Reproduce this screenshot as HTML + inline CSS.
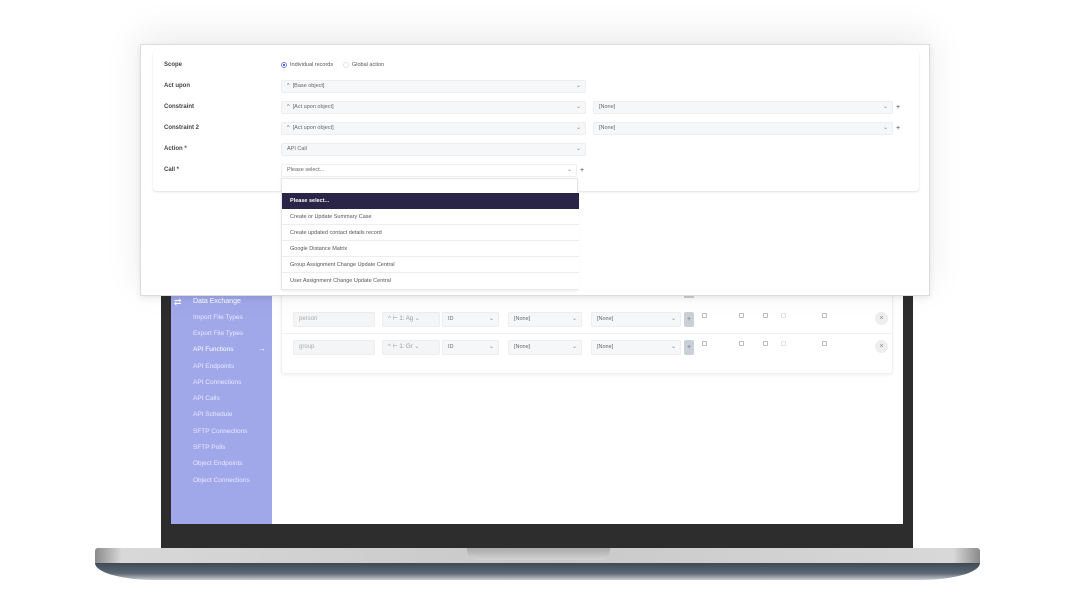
<!DOCTYPE html>
<html><head><meta charset="utf-8"><style>
*{box-sizing:border-box;margin:0;padding:0}
body{width:1070px;height:603px;background:#fff;position:relative;overflow:hidden;font-family:"Liberation Sans",sans-serif;}
.a{position:absolute}
.lbl{font-size:6px;color:#444;font-weight:bold}
.sel{position:absolute;height:13px;background:#f6f7f8;border:1px solid #eceef0;border-radius:2px;font-size:5.5px;color:#666;line-height:11px;padding-left:5px}
.sel .c{position:absolute;right:4px;top:0;color:#888;font-size:6px}
.side{font-size:6.5px;color:#e8eaff}
.inp{position:absolute;height:15px;background:#f4f5f6;border:1px solid #eceef0;border-radius:2px;font-size:6px;color:#aaa;line-height:13px;padding-left:5px}
.cb{position:absolute;width:5px;height:5px;border:1px solid #bbb;border-radius:1px}
.li{position:absolute;left:0;width:297px;height:16px;border-bottom:1px solid #eee;font-size:5.5px;color:#555;line-height:16px;padding-left:8px;background:#fff}
</style></head><body>

<div class="a" style="left:161px;top:240px;width:752px;height:309px;background:#2d2d2d;border-radius:4px 4px 0 0"></div>
<div class="a" style="left:171px;top:240px;width:732px;height:284px;background:#fff"></div>
<div class="a" style="left:171px;top:240px;width:101px;height:284px;background:#a0a8ea"></div>
<div class="a" style="left:95px;top:563px;width:885px;height:17px;background:linear-gradient(#3e4a56,#5b6772 60%,#c7ccd0);border-radius:0 0 60px 60px / 0 0 17px 17px"></div>
<div class="a" style="left:95px;top:548px;width:885px;height:15px;background:linear-gradient(90deg,#8a8a8a,#d8d8d8 3%,#c8c8c8 50%,#d8d8d8 97%,#8a8a8a);border-radius:3px 3px 0 0"></div>
<div class="a" style="left:467px;top:548px;width:143px;height:12px;background:linear-gradient(#a9a9a9,#d4d4d4);border-radius:0 0 10px 10px"></div>

<div class="a" style="left:174px;top:297px;width:10px;height:10px;color:#fff;font-size:9px;line-height:10px">⇄</div>
<div class="a side" style="left:193px;top:298px;color:#fff;font-size:7px">Data Exchange</div>
<div class="a side" style="left:193px;top:314px">Import File Types</div>
<div class="a side" style="left:193px;top:330px">Export File Types</div>
<div class="a side" style="left:193px;top:346px;color:#fff">API Functions</div>
<div class="a" style="left:258px;top:344px;color:#fff;font-size:8px">→</div>
<div class="a side" style="left:193px;top:363px">API Endpoints</div>
<div class="a side" style="left:193px;top:379px">API Connections</div>
<div class="a side" style="left:193px;top:395px">API Calls</div>
<div class="a side" style="left:193px;top:411px">API Schedule</div>
<div class="a side" style="left:193px;top:428px">SFTP Connections</div>
<div class="a side" style="left:193px;top:444px">SFTP Polls</div>
<div class="a side" style="left:193px;top:460px">Object Endpoints</div>
<div class="a side" style="left:193px;top:477px">Object Connections</div>

<div class="a" style="left:281px;top:290px;width:612px;height:84px;border:1px solid #f0f0f0;border-radius:3px;box-shadow:0 1px 3px rgba(0,0,0,.06)"></div>
<div class="a" style="left:282px;top:333px;width:610px;height:1px;background:#f2f2f2"></div>

<div class="inp" style="left:293px;top:312px;width:82px">person</div>
<div class="inp" style="left:382px;top:312px;width:58px;color:#999">^ ⊢ 1: Ag ⌄</div>
<div class="sel" style="left:442px;top:312px;width:57px;height:15px;line-height:13px">ID<span class="c">⌄</span></div>
<div class="sel" style="left:508px;top:312px;width:74px;height:15px;line-height:13px">[None]<span class="c">⌄</span></div>
<div class="sel" style="left:591px;top:312px;width:90px;height:15px;line-height:13px">[None]<span class="c">⌄</span></div>
<div class="a" style="left:684px;top:312px;width:10px;height:15px;background:#c9d0d8;border-radius:2px;font-size:7px;color:#777;text-align:center;line-height:15px">+</div>

<div class="inp" style="left:293px;top:340px;width:82px">group</div>
<div class="inp" style="left:382px;top:340px;width:58px;color:#999">^ ⊢ 1: Gr ⌄</div>
<div class="sel" style="left:442px;top:340px;width:57px;height:15px;line-height:13px">ID<span class="c">⌄</span></div>
<div class="sel" style="left:508px;top:340px;width:74px;height:15px;line-height:13px">[None]<span class="c">⌄</span></div>
<div class="sel" style="left:591px;top:340px;width:90px;height:15px;line-height:13px">[None]<span class="c">⌄</span></div>
<div class="a" style="left:684px;top:340px;width:10px;height:15px;background:#c9d0d8;border-radius:2px;font-size:7px;color:#777;text-align:center;line-height:15px">+</div>
<div class="a" style="left:684px;top:290px;width:10px;height:8px;background:#c9d0d8"></div>

<div class="cb" style="left:702px;top:313px"></div><div class="cb" style="left:739px;top:313px"></div><div class="cb" style="left:763px;top:313px"></div><div class="cb" style="left:781px;top:313px;border-color:#e2e2e2"></div><div class="cb" style="left:822px;top:313px"></div>
<div class="cb" style="left:702px;top:341px"></div><div class="cb" style="left:739px;top:341px"></div><div class="cb" style="left:763px;top:341px"></div><div class="cb" style="left:781px;top:341px;border-color:#e2e2e2"></div><div class="cb" style="left:822px;top:341px"></div>
<div class="a" style="left:875px;top:312px;width:13px;height:13px;border-radius:50%;background:#eee;color:#888;font-size:7px;text-align:center;line-height:13px">×</div>
<div class="a" style="left:875px;top:340px;width:13px;height:13px;border-radius:50%;background:#eee;color:#888;font-size:7px;text-align:center;line-height:13px">×</div>

<div class="a" style="left:140px;top:44px;width:790px;height:252px;background:#fff;border:1px solid #ddd;box-shadow:0 -10px 35px rgba(0,0,0,.08),0 2px 6px rgba(0,0,0,.08)">
  <div class="a" style="left:12px;top:6px;width:766px;height:140px;border-radius:3px;box-shadow:0 1px 2px rgba(0,0,0,.12)"></div>
  <div class="a lbl" style="left:23px;top:17px">Scope</div>
  <div class="a" style="left:140px;top:17px;width:6px;height:6px;border:1px solid #7a83e0;border-radius:50%;background:radial-gradient(#5a64d8 40%,#fff 45%)"></div>
  <div class="a" style="left:149px;top:17px;font-size:5.5px;color:#555">Individual records</div>
  <div class="a" style="left:202px;top:17px;width:6px;height:6px;border:1px solid #e4e4e4;border-radius:50%"></div>
  <div class="a" style="left:211px;top:17px;font-size:5.5px;color:#555">Global action</div>

  <div class="a lbl" style="left:23px;top:38px">Act upon</div>
  <div class="sel" style="left:140px;top:35px;width:305px">^ &nbsp;[Base object]<span class="c">⌄</span></div>
  <div class="a lbl" style="left:23px;top:59px">Constraint</div>
  <div class="sel" style="left:140px;top:56px;width:305px">^ &nbsp;[Act upon object]<span class="c">⌄</span></div>
  <div class="sel" style="left:452px;top:56px;width:300px">[None]<span class="c">⌄</span></div>
  <div class="a" style="left:755px;top:59px;font-size:7px;color:#444">+</div>
  <div class="a lbl" style="left:23px;top:80px">Constraint 2</div>
  <div class="sel" style="left:140px;top:77px;width:305px">^ &nbsp;[Act upon object]<span class="c">⌄</span></div>
  <div class="sel" style="left:452px;top:77px;width:300px">[None]<span class="c">⌄</span></div>
  <div class="a" style="left:755px;top:80px;font-size:7px;color:#444">+</div>
  <div class="a lbl" style="left:23px;top:101px">Action *</div>
  <div class="sel" style="left:140px;top:98px;width:305px">API Call<span class="c">⌄</span></div>
  <div class="a lbl" style="left:23px;top:122px">Call *</div>
  <div class="sel" style="left:140px;top:119px;width:296px;background:#fff">Please select...<span class="c">⌄</span></div>
  <div class="a" style="left:439px;top:122px;font-size:7px;color:#444">+</div>

  <div class="a" style="left:140px;top:133px;width:297px;height:112px;border:1px solid #e6e6e6;background:#fff;box-shadow:0 1px 3px rgba(0,0,0,.08)">
    <div class="li" style="top:14px;height:16px;background:#2a2447;color:#fff;font-weight:bold;border:none">Please select...</div>
    <div class="li" style="top:30px">Create or Update Summary Case</div>
    <div class="li" style="top:46px">Create updated contact details record</div>
    <div class="li" style="top:62px">Google Distance Matrix</div>
    <div class="li" style="top:78px">Group Assignment Change Update Central</div>
    <div class="li" style="top:94px;border:none">User Assignment Change Update Central</div>
  </div>
</div>
</body></html>
